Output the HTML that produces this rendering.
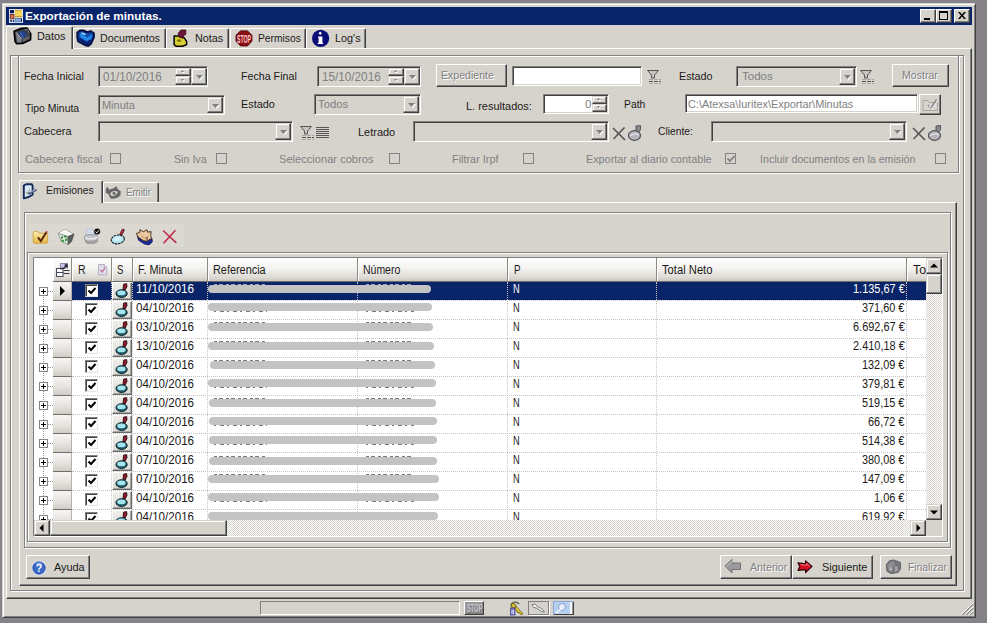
<!DOCTYPE html><html lang="es"><head><meta charset="utf-8"><title>Exportación de minutas.</title><style>
html,body{margin:0;padding:0}
body{width:987px;height:623px;overflow:hidden;background:#858387;position:relative;font-family:"Liberation Sans",sans-serif;font-size:11.5px;color:#1c1a18;}
.a{position:absolute;box-sizing:border-box}
.t{position:absolute;white-space:nowrap;line-height:13px;height:13px;transform-origin:0 0}
.g{color:#808080}
.e{color:#808080;text-shadow:1px 1px 0 #fff}
.et{position:absolute;box-sizing:border-box;border:1px solid #808080;box-shadow:inset 1px 1px 0 #fff,1px 1px 0 #fff}
.btn{position:absolute;box-sizing:border-box;background:#d6d3cd;border:1px solid;border-color:#fff #404040 #404040 #fff;box-shadow:inset -1px -1px 0 #808080}
.sb{position:absolute;box-sizing:border-box;background:#d6d3cd;border:1px solid;border-color:#d6d3cd #404040 #404040 #d6d3cd;box-shadow:inset -1px -1px 0 #808080,inset 1px 1px 0 #fff}
.sk{position:absolute;box-sizing:border-box;border:1px solid;border-color:#808080 #fff #fff #808080;box-shadow:inset 1px 1px 0 #404040,inset -1px -1px 0 #d6d3cd}
.cb{position:absolute;box-sizing:border-box;width:11px;height:11px;border:1px solid #848284;background:#d6d3cd}
.tab{position:absolute;box-sizing:border-box;border-top:1px solid #fff;border-left:1px solid #fff;border-right:1px solid #404040;box-shadow:inset -1px 0 0 #808080;border-radius:2px 2px 0 0;background:#d6d3cd}
.hd{position:absolute;box-sizing:border-box;top:0;height:24px;background:linear-gradient(#fff 0%,#f4f3f0 45%,#dddad4 85%,#c9c6bf 100%);border-right:1px solid #8c8a86;border-bottom:1px solid #6e6c68;box-shadow:inset 1px 0 0 #fff}
.rh{position:absolute;box-sizing:border-box;left:19px;width:19px;height:19px;background:linear-gradient(#f6f5f3 0%,#e4e2dd 60%,#cfccc5 100%);border-bottom:1px solid #6f6d69;border-right:1px solid #b5b2ab}
.row{position:absolute;left:0;width:892px;height:19px}
.hl{position:absolute;left:38px;width:854px;height:0;border-top:1px dotted #c4c4c4}
.vl{position:absolute;top:24px;width:0;height:238px;border-left:1px dotted #c4c4c4}
.ck{position:absolute;box-sizing:border-box;left:51px;top:2px;width:13px;height:13px;background:#fff;border:1px solid;border-color:#808080 #e8e6e0 #e8e6e0 #808080;box-shadow:inset 1px 1px 0 #404040}
.sc{position:absolute;box-sizing:border-box;left:78px;top:0;width:20px;height:18px;background:linear-gradient(#efeeeb,#dddad4);border:1px solid;border-color:#fff #6a6a6a #6a6a6a #fff;box-shadow:inset -1px -1px 0 #a8a6a0}
.pm{position:absolute;box-sizing:border-box;left:5px;top:5px;width:9px;height:9px;border:1px solid #848484;background:#fff}
.bar{position:absolute;height:8px;border-radius:4px;background:#c3c3c3}
.gt{position:absolute;white-space:nowrap;line-height:13px;height:13px;top:2px;transform-origin:0 0}
</style></head><body>
<div class="a" style="left:2px;top:3px;width:974px;height:615px;background:#d6d3cd;border:1px solid;border-color:#d6d3cd #404040 #404040 #d6d3cd;box-shadow:inset 1px 1px 0 #fff,inset -1px -1px 0 #808080"></div>
<div class="a" style="left:6px;top:7px;width:966px;height:18px;background:#0a246a"></div>
<svg class="a" style="left:9px;top:9px" width="14" height="14" viewBox="0 0 14 14"><rect x="0" y="0" width="14" height="14" fill="#dfe6f8"/><rect x="1" y="1" width="4" height="3.2" fill="#0a1c58"/><rect x="1.2" y="11" width="1.6" height="1.8" fill="#0a1c58"/><rect x="3.8" y="11" width="1.2" height="1.8" fill="#0a1c58"/><rect x="5.8" y="0.8" width="7.2" height="7.4" fill="#f2d458"/><rect x="5.8" y="0.8" width="7.2" height="1" fill="#caa040"/><rect x="5.8" y="7.2" width="7.2" height="1" fill="#b89030"/><rect x="1.3" y="5.5" width="3.6" height="4.3" fill="#d07858" stroke="#7a2c1c" stroke-width="0.9"/><rect x="6" y="9.4" width="5.2" height="3.4" fill="#8cacdc" stroke="#5070a8" stroke-width="0.8"/><rect x="12" y="9.3" width="1" height="3.6" fill="#0a1c58"/></svg>
<div class="t " style="left:25.2px;top:9px;transform:scaleX(1.0243);color:#fff;font-weight:bold;font-size:11.5px;line-height:14px;height:14px;">Exportación de minutas.</div>
<div class="btn" style="left:920px;top:9px;width:16px;height:14px;"></div>
<div class="btn" style="left:936px;top:9px;width:16px;height:14px;"></div>
<div class="btn" style="left:954px;top:9px;width:16px;height:14px;"></div>
<div class="a" style="left:924px;top:18px;width:6px;height:2px;background:#000"></div><div class="a" style="left:939px;top:11px;width:9px;height:9px;border:1px solid #000;border-top-width:2px"></div><svg class="a" style="left:958px;top:12px" width="8" height="7" viewBox="0 0 8 7"><path d="M0 0h2l2 2.5L6 0h2L5 3.5 8 7H6L4 4.5 2 7H0l3-3.5z" fill="#000"/></svg>
<div class="a" style="left:6px;top:48px;width:966px;height:551px;border:1px solid;border-color:#fff #404040 #404040 #fff;box-shadow:inset -1px -1px 0 #808080"></div>
<div class="tab" style="left:73px;top:28px;width:93px;height:20px;"></div>
<div class="t " style="left:100px;top:32px;transform:scaleX(0.9288);">Documentos</div>
<div class="tab" style="left:166px;top:28px;width:63px;height:20px;"></div>
<div class="t " style="left:195.2px;top:32px;transform:scaleX(0.9409);">Notas</div>
<div class="tab" style="left:230px;top:28px;width:76px;height:20px;"></div>
<div class="t " style="left:258px;top:32px;transform:scaleX(0.8938);">Permisos</div>
<div class="tab" style="left:306px;top:28px;width:60px;height:20px;"></div>
<div class="t " style="left:335.2px;top:32px;transform:scaleX(0.9422);">Log's</div>
<div class="tab" style="left:6px;top:26px;width:67px;height:23px;border-radius:2px 2px 0 0;"></div>
<div class="a" style="left:7px;top:48px;width:64px;height:2px;background:#d6d3cd"></div>
<div class="t " style="left:37px;top:30px;transform:scaleX(0.9476);">Datos</div>
<svg class="a" style="left:13px;top:27px" width="19" height="18" viewBox="0 0 19 18"><path d="M1.1 4.3 L8.4 1.4 L14 1.2 L17.7 6.7 L17.5 12.8 L9.6 16.4 L3.5 16.6 L2.1 14.4 Z" fill="#3c4046" stroke="#000" stroke-width="1.7" stroke-linejoin="round"/><path d="M3 6 L8.5 12.2 L8.3 15.4 L4.2 15.6 Z" fill="#7c8288"/><path d="M9.5 12 L16.5 8.5 L16.4 12 L9.6 15.2 Z" fill="#5c6066"/><path d="M5.1 5.9 L11.2 3.5 L14 9.1 L8.8 11.6 Z" fill="#24408c"/><path d="M7.5 5.5 L10.3 10.7" stroke="#5878c0" stroke-width="1"/><path d="M2.9 5.2 L8.6 11.8" fill="none" stroke="#c8ccd0" stroke-width="0.9"/><path d="M11.5 2.5 L14.5 2.5 L16.5 6.5" fill="none" stroke="#909498" stroke-width="0.9"/></svg><svg class="a" style="left:76px;top:29px" width="19" height="18" viewBox="0 0 19 18"><path d="M1.3 3.5 L4.1 1.5 L7.8 1.5 L11 3.1 L15 2.3 L17.9 4.3 L17.9 8.3 L15 14.8 L12.2 16.9 L9.8 16.5 L2.1 12.4 L1.3 8.3 Z" fill="#0e48a8" stroke="#040c40" stroke-width="1.9" stroke-linejoin="round"/><path d="M4 4.2 L11.5 8.5 L16.2 5 L15 10 L11 12 L4.5 8.5 Z" fill="#2288ec"/><path d="M5.5 4 L9.5 5.6" stroke="#b0e4ff" stroke-width="1.4"/><path d="M3.5 10.2 L11.5 15 L14.5 11" fill="none" stroke="#061a68" stroke-width="2"/></svg><svg class="a" style="left:172px;top:28px" width="17" height="20" viewBox="0 0 17 20"><path d="M2.1 8.1 L8.6 8.1 L12.2 9.8 L14.6 13.4 L14.6 16.6 L10.6 18.3 L4.1 18.3 L2.1 16.6 Z" fill="#d8d030" stroke="#000" stroke-width="1.5" stroke-linejoin="round"/><path d="M6.1 5.3 L9 2 L13.8 2 L13.8 6.5 L11.8 7.3 L11 10.2 L7.3 9.3 Z" fill="#6a1838" stroke="#3a0818" stroke-width="0.8"/><path d="M4.5 12.5 q3 -2.5 5 0 q-2 3 -5 0z" fill="#7a7410"/></svg><svg class="a" style="left:235px;top:30px" width="18" height="17" viewBox="0 0 18 17"><path d="M5.5 0.9 L12.5 0.9 L16.9 5.3 L16.9 11.2 L12.5 15.9 L5.5 15.9 L1 11.2 L1 5.3 Z" fill="#8a0c14" stroke="#5a060c" stroke-width="1"/><text x="9" y="12.6" font-family="Liberation Sans, sans-serif" font-weight="bold" font-size="11.5" fill="#ffd0d0" text-anchor="middle" textLength="13.8" lengthAdjust="spacingAndGlyphs">STOP</text></svg><svg class="a" style="left:311px;top:29px" width="19" height="19" viewBox="0 0 19 19"><circle cx="9.6" cy="9.3" r="8.6" fill="#0c0c78"/><path d="M9.2 2.6 L10.9 4.3 L9.2 6 L7.5 4.3 Z" fill="#fff"/><path d="M7.2 7.6 H11.4 V13.3 L12.4 15 H6.4 L7.6 13.3 V9 H7.2 Z" fill="#fff"/></svg>
<div class="et" style="left:10px;top:55px;width:954px;height:536px;"></div>
<div class="et" style="left:18px;top:55px;width:941px;height:118px;"></div>
<div class="t " style="left:24.2px;top:70px;transform:scaleX(0.9257);">Fecha Inicial</div>
<div class="t " style="left:241px;top:70px;transform:scaleX(0.9279);">Fecha Final</div>
<div class="t " style="left:679.3px;top:70px;transform:scaleX(0.9345);">Estado</div>
<div class="sk" style="left:98px;top:66px;width:110px;height:21px;background:#d6d3cd"></div>
<div class="t g" style="left:103.2px;top:70.6px;transform:scaleX(0.9378);font-size:12.5px;">01/10/2016</div>
<div class="sb" style="left:175px;top:68px;width:16px;height:8px;"></div>
<div class="sb" style="left:175px;top:76px;width:16px;height:9px;"></div>
<div class="sb" style="left:191px;top:68px;width:16px;height:17px;"></div>
<svg class="a" style="left:196px;top:75px" width="8" height="5"><polygon points="0,0 7,0 3.5,4" transform="translate(1,1)" fill="#fff"/><polygon points="0,0 7,0 3.5,4" fill="#808080"/></svg>
<svg class="a" style="left:181px;top:70px" width="4" height="3"><polygon points="0,2 3,2 1.5,0" transform="translate(1,1)" fill="#fff"/><polygon points="0,2 3,2 1.5,0" fill="#808080"/></svg>
<svg class="a" style="left:181px;top:79px" width="4" height="3"><polygon points="0,0 3,0 1.5,2" transform="translate(1,1)" fill="#fff"/><polygon points="0,0 3,0 1.5,2" fill="#808080"/></svg>
<div class="sk" style="left:317px;top:66px;width:104px;height:21px;background:#d6d3cd"></div>
<div class="t g" style="left:322.2px;top:70.6px;transform:scaleX(0.9378);font-size:12.5px;">15/10/2016</div>
<div class="sb" style="left:388px;top:68px;width:16px;height:8px;"></div>
<div class="sb" style="left:388px;top:76px;width:16px;height:9px;"></div>
<div class="sb" style="left:404px;top:68px;width:16px;height:17px;"></div>
<svg class="a" style="left:409px;top:75px" width="8" height="5"><polygon points="0,0 7,0 3.5,4" transform="translate(1,1)" fill="#fff"/><polygon points="0,0 7,0 3.5,4" fill="#808080"/></svg>
<svg class="a" style="left:394px;top:70px" width="4" height="3"><polygon points="0,2 3,2 1.5,0" transform="translate(1,1)" fill="#fff"/><polygon points="0,2 3,2 1.5,0" fill="#808080"/></svg>
<svg class="a" style="left:394px;top:79px" width="4" height="3"><polygon points="0,0 3,0 1.5,2" transform="translate(1,1)" fill="#fff"/><polygon points="0,0 3,0 1.5,2" fill="#808080"/></svg>
<div class="btn" style="left:436px;top:64px;width:71px;height:23px;"></div>
<div class="t e" style="left:441.4px;top:69px;transform:scaleX(0.9185);">Expediente</div>
<div class="sk" style="left:512px;top:66px;width:130px;height:20px;background:#fff"></div>
<div class="sk" style="left:736px;top:66px;width:121px;height:21px;background:#d6d3cd"></div>
<div class="sb" style="left:839px;top:68px;width:16px;height:17px;"></div>
<svg class="a" style="left:844px;top:75px" width="8" height="5"><polygon points="0,0 7,0 3.5,4" transform="translate(1,1)" fill="#fff"/><polygon points="0,0 7,0 3.5,4" fill="#808080"/></svg>
<div class="t g" style="left:742.2px;top:70px;transform:scaleX(1.0037);">Todos</div>
<div class="btn" style="left:892px;top:64px;width:57px;height:23px;"></div>
<div class="t e" style="left:901.8px;top:69px;transform:scaleX(0.9199);">Mostrar</div>
<div class="t " style="left:24.6px;top:102px;transform:scaleX(0.9078);">Tipo Minuta</div>
<div class="sk" style="left:98px;top:95px;width:127px;height:20px;background:#d6d3cd"></div>
<div class="sb" style="left:207px;top:97px;width:16px;height:16px;"></div>
<svg class="a" style="left:212px;top:104px" width="8" height="5"><polygon points="0,0 7,0 3.5,4" transform="translate(1,1)" fill="#fff"/><polygon points="0,0 7,0 3.5,4" fill="#808080"/></svg>
<div class="t g" style="left:102.2px;top:99px;transform:scaleX(0.9521);">Minuta</div>
<div class="t " style="left:241px;top:98px;transform:scaleX(0.9458);">Estado</div>
<div class="sk" style="left:314px;top:94px;width:107px;height:21px;background:#d6d3cd"></div>
<div class="sb" style="left:403px;top:96px;width:16px;height:17px;"></div>
<svg class="a" style="left:408px;top:103px" width="8" height="5"><polygon points="0,0 7,0 3.5,4" transform="translate(1,1)" fill="#fff"/><polygon points="0,0 7,0 3.5,4" fill="#808080"/></svg>
<div class="t g" style="left:318.4px;top:98px;transform:scaleX(0.9805);">Todos</div>
<div class="t " style="left:466px;top:100px;transform:scaleX(0.9541);">L. resultados:</div>
<div class="sk" style="left:543px;top:94px;width:66px;height:20px;background:#fff"></div>
<div class="t g" style="left:585px;top:98px;">0</div>
<div class="sb" style="left:592px;top:96px;width:15px;height:8px;"></div>
<div class="sb" style="left:592px;top:104px;width:15px;height:8px;"></div>
<svg class="a" style="left:597px;top:98px" width="4" height="3"><polygon points="0,2 3,2 1.5,0" transform="translate(1,1)" fill="#fff"/><polygon points="0,2 3,2 1.5,0" fill="#808080"/></svg>
<svg class="a" style="left:597px;top:106px" width="4" height="3"><polygon points="0,0 3,0 1.5,2" transform="translate(1,1)" fill="#fff"/><polygon points="0,0 3,0 1.5,2" fill="#808080"/></svg>
<div class="t " style="left:624.2px;top:98px;transform:scaleX(0.8976);">Path</div>
<div class="sk" style="left:685px;top:94px;width:233px;height:19px;background:#fff"></div>
<div class="t g" style="left:688px;top:98px;transform:scaleX(0.9472);">C:\Atexsa\Iuritex\Exportar\Minutas</div>
<div class="btn" style="left:919px;top:94px;width:22px;height:21px;"></div>
<div class="t " style="left:24.2px;top:125px;transform:scaleX(0.9539);">Cabecera</div>
<div class="sk" style="left:98px;top:121px;width:195px;height:21px;background:#d6d3cd"></div>
<div class="sb" style="left:275px;top:123px;width:16px;height:17px;"></div>
<svg class="a" style="left:280px;top:130px" width="8" height="5"><polygon points="0,0 7,0 3.5,4" transform="translate(1,1)" fill="#fff"/><polygon points="0,0 7,0 3.5,4" fill="#808080"/></svg>
<div class="t " style="left:358.3px;top:126px;transform:scaleX(0.9529);">Letrado</div>
<div class="sk" style="left:413px;top:121px;width:196px;height:21px;background:#d6d3cd"></div>
<div class="sb" style="left:591px;top:123px;width:16px;height:17px;"></div>
<svg class="a" style="left:596px;top:130px" width="8" height="5"><polygon points="0,0 7,0 3.5,4" transform="translate(1,1)" fill="#fff"/><polygon points="0,0 7,0 3.5,4" fill="#808080"/></svg>
<div class="t " style="left:658px;top:125px;transform:scaleX(0.8935);">Cliente:</div>
<div class="sk" style="left:711px;top:121px;width:196px;height:21px;background:#d6d3cd"></div>
<div class="sb" style="left:889px;top:123px;width:16px;height:17px;"></div>
<svg class="a" style="left:894px;top:130px" width="8" height="5"><polygon points="0,0 7,0 3.5,4" transform="translate(1,1)" fill="#fff"/><polygon points="0,0 7,0 3.5,4" fill="#808080"/></svg>
<svg class="a" style="left:647px;top:70px" width="15" height="15" viewBox="0 0 15 15"><path d="M0.5 0.5 H11.5 L7.5 5 V8 H4.5 V5 Z" fill="#c8c6c0" stroke="#555" stroke-width="1"/><path d="M2 9.5h4M7 9.5h4M12 9.5h2M2 13.5h4M7 13.5h4M12 13.5h2" stroke="#a8a6a0" stroke-width="1"/><path d="M2 11.5h4M7 11.5h4M12 11.5h2" stroke="#555" stroke-width="1"/></svg><svg class="a" style="left:860px;top:70px" width="15" height="15" viewBox="0 0 15 15"><path d="M0.5 0.5 H11.5 L7.5 5 V8 H4.5 V5 Z" fill="#c8c6c0" stroke="#555" stroke-width="1"/><path d="M2 9.5h4M7 9.5h4M12 9.5h2M2 13.5h4M7 13.5h4M12 13.5h2" stroke="#a8a6a0" stroke-width="1"/><path d="M2 11.5h4M7 11.5h4M12 11.5h2" stroke="#555" stroke-width="1"/></svg><svg class="a" style="left:300px;top:126px" width="15" height="15" viewBox="0 0 15 15"><path d="M0.5 0.5 H11.5 L7.5 5 V8 H4.5 V5 Z" fill="#c8c6c0" stroke="#555" stroke-width="1"/><path d="M2 9.5h4M7 9.5h4M12 9.5h2M2 13.5h4M7 13.5h4M12 13.5h2" stroke="#a8a6a0" stroke-width="1"/><path d="M2 11.5h4M7 11.5h4M12 11.5h2" stroke="#555" stroke-width="1"/></svg><svg class="a" style="left:316px;top:127px" width="13" height="11" viewBox="0 0 13 11"><path d="M0 .5h13M0 2.5h13M0 4.5h13M0 6.5h13M0 8.5h13M0 10.5h13" stroke="#555" stroke-width="1"/></svg><svg class="a" style="left:612px;top:127px" width="14" height="14" viewBox="0 0 14 14"><path d="M1 1 L13 13" stroke="#555" stroke-width="1.6"/><path d="M12.5 0.5 L1.5 12" stroke="#555" stroke-width="1.6"/></svg><svg class="a" style="left:628px;top:125px" width="14" height="17" viewBox="0 0 14 17"><path d="M8 1 L12.5 0.5 L12.5 4.5 L10.5 7.5 L8 6.5 Z" fill="#8a8a90" stroke="#555" stroke-width="1"/><ellipse cx="6.5" cy="10.5" rx="6" ry="4.8" fill="#b4b4ba" stroke="#505050" stroke-width="1.2"/><path d="M2 11 q4 -3.5 9 -1" fill="none" stroke="#e4e4e8" stroke-width="1.2"/></svg><svg class="a" style="left:912px;top:127px" width="14" height="14" viewBox="0 0 14 14"><path d="M1 1 L13 13" stroke="#555" stroke-width="1.6"/><path d="M12.5 0.5 L1.5 12" stroke="#555" stroke-width="1.6"/></svg><svg class="a" style="left:928px;top:125px" width="14" height="17" viewBox="0 0 14 17"><path d="M8 1 L12.5 0.5 L12.5 4.5 L10.5 7.5 L8 6.5 Z" fill="#8a8a90" stroke="#555" stroke-width="1"/><ellipse cx="6.5" cy="10.5" rx="6" ry="4.8" fill="#b4b4ba" stroke="#505050" stroke-width="1.2"/><path d="M2 11 q4 -3.5 9 -1" fill="none" stroke="#e4e4e8" stroke-width="1.2"/></svg><svg class="a" style="left:922px;top:97px" width="17" height="15" viewBox="0 0 17 15"><path d="M1 3.5h5l1.5 2H15.5V13.5H1z" fill="#d8d5ce" stroke="#a8a6a0"/><path d="M6 8 L9 11.5 L14.5 2.5" fill="none" stroke="#8a8a90" stroke-width="1.6"/><path d="M7 9 L10 12.5 L15.5 3.5" fill="none" stroke="#fff" stroke-width="0.8"/></svg>
<div class="t g" style="left:25px;top:153px;transform:scaleX(0.9738);">Cabecera fiscal</div>
<div class="cb" style="left:110px;top:153px;width:11px;height:11px;"></div>
<div class="t g" style="left:174.2px;top:153px;transform:scaleX(0.9287);">Sin Iva</div>
<div class="cb" style="left:216px;top:153px;width:11px;height:11px;"></div>
<div class="t g" style="left:279px;top:153px;transform:scaleX(0.966);">Seleccionar cobros</div>
<div class="cb" style="left:389px;top:153px;width:11px;height:11px;"></div>
<div class="t g" style="left:452px;top:153px;transform:scaleX(0.9445);">Filtrar Irpf</div>
<div class="cb" style="left:523px;top:153px;width:11px;height:11px;"></div>
<div class="t g" style="left:586.3px;top:153px;transform:scaleX(0.9398);">Exportar al diario contable</div>
<div class="cb" style="left:725px;top:153px;width:11px;height:11px;"></div>
<div class="t g" style="left:760px;top:153px;transform:scaleX(0.9282);">Incluir documentos en la emisión</div>
<div class="cb" style="left:935px;top:153px;width:11px;height:11px;"></div>
<svg class="a" style="left:727px;top:155px" width="8" height="8" viewBox="0 0 8 8"><path d="M0.5 3.5 L3 6 L7.5 1" fill="none" stroke="#808080" stroke-width="1.8"/></svg>
<div class="a" style="left:19px;top:202px;width:938px;height:384px;border:1px solid;border-color:#fff #404040 #404040 #fff;box-shadow:inset -1px -1px 0 #808080"></div>
<div class="tab" style="left:103px;top:182px;width:56px;height:20px;"></div>
<div class="t e" style="left:126.2px;top:186px;transform:scaleX(0.8515);">Emitir</div>
<div class="tab" style="left:19px;top:180px;width:84px;height:23px;"></div>
<div class="a" style="left:20px;top:202px;width:81px;height:2px;background:#d6d3cd"></div>
<div class="t " style="left:46.2px;top:184px;transform:scaleX(0.8999);">Emisiones</div>
<svg class="a" style="left:22px;top:183px" width="16" height="17" viewBox="0 0 16 17"><path d="M1.8 2.6 L4.2 1.2 L9.8 1.2 L10.6 3 L10.6 11.6 L6.6 14 L1.8 15.4 Z" fill="#d8e8f8" stroke="#142a58" stroke-width="1.9" stroke-linejoin="round"/><path d="M3.8 8.6 L5.8 11 L7.8 6" fill="none" stroke="#a0ac88" stroke-width="1.1"/><path d="M6.4 10.8 L14.6 6.6" stroke="#46507c" stroke-width="2"/><path d="M8.4 9.2 L13.6 6.6" stroke="#ccd4ec" stroke-width="0.8"/></svg><svg class="a" style="left:105px;top:185px" width="17" height="15" viewBox="0 0 17 15"><path d="M0.8 4 L2.5 1.5 L4 4.5 L8 3.5 L11.5 1.2 L12.5 3.8 L15.8 6.5 L15.5 10.5 L12 13 L6.5 14 L4.5 12 L3.5 9 L0.8 8 Z" fill="#686868"/><path d="M5 8.5 q3.5 -4 8 -1.5 q-2.5 4.5 -6.5 4 z" fill="#d8d6d2"/><circle cx="9" cy="8.3" r="1.5" fill="#686868"/></svg>
<div class="et" style="left:24px;top:212px;width:927px;height:336px;"></div>
<div class="a" style="left:29px;top:224px;width:155px;height:23px;background:#dbd8d1"></div>
<svg class="a" style="left:32px;top:229px" width="17" height="16" viewBox="0 0 17 16"><linearGradient id="fg" x1="0" y1="0" x2="0" y2="1"><stop offset="0" stop-color="#fbeeb0"/><stop offset="1" stop-color="#e6b648"/></linearGradient><path d="M1.2 3.6 Q1.2 2.4 2.4 2.4 H5.8 L7.2 4.2 H14.6 Q15.6 4.2 15.6 5.2 V13.2 Q15.6 14.2 14.6 14.2 H2.2 Q1.2 14.2 1.2 13.2 Z" fill="url(#fg)" stroke="#d0a040" stroke-width="0.9"/><path d="M6 8.4 L8.8 12 L14.4 3.2" fill="none" stroke="#52200c" stroke-width="1.9"/><circle cx="14.6" cy="3" r="0.9" fill="#b83820"/></svg><svg class="a" style="left:57px;top:228px" width="18" height="18" viewBox="0 0 18 18"><path d="M1.2 5.4 L8 1.4 L17 6 L11 8.6 Z" fill="#f4f6f4" stroke="#9aa09a" stroke-width="0.8"/><path d="M1.2 5.4 L11 8.6 L11.2 16.6 L4 13.2 Z" fill="#dce6dc" stroke="#8a908a" stroke-width="0.8"/><path d="M11 8.6 L17 6 L14.4 13.8 L11.2 16.6 Z" fill="#5c605c" stroke="#3c403c" stroke-width="0.6"/><path d="M3.4 4.8 L8 2.6 L13.6 5.6" fill="none" stroke="#fff" stroke-width="1"/><circle cx="7" cy="10.6" r="2.5" fill="none" stroke="#2c8c34" stroke-width="1.7" stroke-dasharray="2.6 1.2"/></svg><svg class="a" style="left:84px;top:228px" width="18" height="17" viewBox="0 0 18 17"><path d="M3 0.8 L8.4 0.8 L10.6 6.4 L9.6 8.6 L2.6 8.6 L1.8 6 Z" fill="#dfe8f4" stroke="#aab4c4" stroke-width="0.7"/><path d="M3.6 2.6 L8 2.6 M3.2 4.4 L8.8 4.4" stroke="#b8c8e0" stroke-width="0.8"/><path d="M0.6 8.4 L3.2 6.6 L11.2 6.6 L13.8 8.6 L13.8 11 L10.8 13 L3.4 13.4 L0.6 11.4 Z" fill="#c4c4c8" stroke="#86868c" stroke-width="0.8"/><path d="M1 9.4 L3.8 11 L10.8 10.6 L13.6 9" fill="none" stroke="#f4f4f8" stroke-width="1.1"/><path d="M1.2 12.6 L3.6 14.4 L10.8 14 L13.4 12.2 L13.6 13.4 L10.8 15.4 L3.6 15.8 L1.2 13.8 Z" fill="#a4a4aa" stroke="#7c7c82" stroke-width="0.5"/><circle cx="13.2" cy="3.6" r="3" fill="#0c0c0c"/><path d="M11.6 3.6 L12.8 4.9 L14.9 2.3" fill="none" stroke="#fff" stroke-width="1"/></svg><svg class="a" style="left:110px;top:228px" width="16" height="17" viewBox="0 0 16 17"><path d="M9.4 7.4 L12 1.6 L13.6 1 L14.2 2.4 L11.2 8.2 Z" fill="#c42c40" stroke="#3c0c14" stroke-width="0.8"/><ellipse cx="7.8" cy="11.4" rx="6.6" ry="4.4" transform="rotate(-8 7.8 11.4)" fill="#b4e2ee" stroke="#0c1418" stroke-width="1.1" stroke-dasharray="2.4 0.8"/><ellipse cx="7.4" cy="10.8" rx="4.2" ry="2" transform="rotate(-8 7.4 10.8)" fill="#d4f2f8"/></svg><svg class="a" style="left:135px;top:228px" width="19" height="18" viewBox="0 0 19 18"><path d="M2.4 8.4 L9 13 L17 10.6 L17.2 14 L14 16.8 L9.6 16 L3.6 12.2 Z" fill="#1c2c9c" stroke="#0a1260" stroke-width="0.9"/><path d="M1.4 5.4 L4.6 4.6 L5 1.6 L8.2 3.8 L12 1.8 L12.6 4.2 L16.2 3.6 L15.6 7.4 L16.6 10.4 L12 13.2 L8.6 12.8 L3 9 Z" fill="#ecc8a0" stroke="#3c2410" stroke-width="0.9" stroke-linejoin="round"/><path d="M5.6 7 L9.6 10.4 L13.6 8.2" fill="none" stroke="#b88858" stroke-width="0.9"/><path d="M12 9 v3.6" stroke="#3c2410" stroke-width="0.9"/></svg><svg class="a" style="left:162px;top:230px" width="15" height="14" viewBox="0 0 15 14"><path d="M1.6 1 L13.8 12.4 M13 0.8 L2 12.8" stroke="#c03050" stroke-width="1.7" stroke-linecap="round"/></svg>
<div class="et" style="left:27px;top:252px;width:921px;height:290px;"></div>
<div class="a" style="left:33px;top:257px;width:910px;height:280px;border:1px solid;border-color:#808080 #fff #fff #808080;background:#fff;overflow:hidden">
<div class="a" style="left:0;top:0;width:892px;height:262px;overflow:hidden">
<div class="hd" style="left:19px;width:19px"></div>
<div class="hd" style="left:38px;width:40px"></div>
<div class="hd" style="left:78px;width:21px"></div>
<div class="hd" style="left:99px;width:75px"></div>
<div class="hd" style="left:174px;width:150px"></div>
<div class="hd" style="left:324px;width:150px"></div>
<div class="hd" style="left:474px;width:149px"></div>
<div class="hd" style="left:623px;width:250px"></div>
<div class="hd" style="left:873px;width:30px"></div>
<div class="gt" style="top:5.5px;left:43.5px;transform:scaleX(0.8811);font-size:12px;">R</div>
<div class="gt" style="top:5.5px;left:82.7px;transform:scaleX(0.7983);font-size:12px;">S</div>
<div class="gt" style="top:5.5px;left:104.2px;transform:scaleX(0.9089);font-size:12px;">F. Minuta</div>
<div class="gt" style="top:5.5px;left:178.8px;transform:scaleX(0.9073);font-size:12px;">Referencia</div>
<div class="gt" style="top:5.5px;left:329.2px;transform:scaleX(0.8723);font-size:12px;">Número</div>
<div class="gt" style="top:5.5px;left:479.5px;transform:scaleX(0.8116);font-size:12px;">P</div>
<div class="gt" style="top:5.5px;left:628.3px;transform:scaleX(0.934);font-size:12px;">Total Neto</div>
<div class="gt" style="top:5.5px;left:878.5px;transform:scaleX(1.0256);font-size:12px;">To</div>
<svg class="a" style="left:21px;top:4px" width="16" height="17" viewBox="0 0 16 17"><rect x="5.5" y="1.5" width="7" height="4.5" fill="#c8c6ec" stroke="#8886a8"/><rect x="1.5" y="6.5" width="6.5" height="4" fill="#fff" stroke="#484860"/><rect x="1.5" y="10.5" width="6.5" height="4" fill="#fff" stroke="#484860"/><path d="M8.5 8.5 H14.5 M8.5 11.5 H14.5" stroke="#383848" stroke-width="1.1"/><path d="M5.5 7 L9 6.2 L11.5 3.2 M9.6 2.8 h2.4 v2.4" stroke="#20202c" stroke-width="1.2" fill="none"/></svg><svg class="a" style="left:64px;top:6px" width="10" height="12" viewBox="0 0 10 12"><path d="M0.5 0.5 H6 L8.8 3.2 V10.8 H0.5 Z" fill="#e2deea" stroke="#b4b0c0"/><path d="M6 0.5 V3.2 H8.8" fill="none" stroke="#b4b0c0" stroke-width="0.8"/><path d="M2.4 5.8 L4.2 8 L7 3.8" fill="none" stroke="#c068a0" stroke-width="1.2"/></svg>
<div class="a" style="left:9px;top:34px;width:0;height:228px;border-left:1px dotted #909090"></div>
<div class="row" style="top:24px">
<div class="a" style="left:38px;top:0;width:854px;height:18px;background:#0a246a"></div>
<div class="a" style="left:14px;top:9px;width:5px;height:0;border-top:1px dotted #909090"></div>
<div class="pm"><div class="a" style="left:1px;top:3px;width:5px;height:1px;background:#000"></div><div class="a" style="left:3px;top:1px;width:1px;height:5px;background:#000"></div></div>
<div class="rh"></div>
<div class="a" style="left:26px;top:4px;width:0;height:0;border-left:5px solid #000;border-top:5px solid transparent;border-bottom:5px solid transparent"></div>
<div class="ck"><svg class="a" style="left:1px;top:1px" width="10" height="10" viewBox="0 0 10 10"><path d="M1.5 4.5 L4 7 L8.5 2" fill="none" stroke="#000" stroke-width="2"/></svg></div>
<div class="sc"><svg class="a" style="left:2px;top:0" width="14" height="16" viewBox="0 0 14 16"><path d="M8.6 1.2 L11.6 0.6 L12 3.4 L10 7.2 L8 6.4 Z" fill="#8c1c2c" stroke="#2c0810" stroke-width="0.9"/><ellipse cx="6.6" cy="10.6" rx="5.6" ry="3.9" fill="#1c5866" stroke="#0c242c" stroke-width="1"/><ellipse cx="6.4" cy="9.9" rx="4.2" ry="2.3" fill="#a4e4ee"/></svg></div>
</div>
<div class="gt" style="top:24.5px;left:101.6px;transform:scaleX(0.9421);color:#fff;font-size:12.5px;">11/10/2016</div>
<div class="gt" style="top:24.5px;left:478.7px;transform:scaleX(0.7385);color:#fff;font-size:12.5px;">N</div>
<div class="gt" style="top:24.5px;left:818.6px;transform:scaleX(0.8755);color:#fff;font-size:12.5px;">1.135,67 €</div>
<div class="row" style="top:43px">
<div class="a" style="left:14px;top:9px;width:5px;height:0;border-top:1px dotted #909090"></div>
<div class="pm"><div class="a" style="left:1px;top:3px;width:5px;height:1px;background:#000"></div><div class="a" style="left:3px;top:1px;width:1px;height:5px;background:#000"></div></div>
<div class="rh"></div>
<div class="ck"><svg class="a" style="left:1px;top:1px" width="10" height="10" viewBox="0 0 10 10"><path d="M1.5 4.5 L4 7 L8.5 2" fill="none" stroke="#000" stroke-width="2"/></svg></div>
<div class="sc"><svg class="a" style="left:2px;top:0" width="14" height="16" viewBox="0 0 14 16"><path d="M8.6 1.2 L11.6 0.6 L12 3.4 L10 7.2 L8 6.4 Z" fill="#8c1c2c" stroke="#2c0810" stroke-width="0.9"/><ellipse cx="6.6" cy="10.6" rx="5.6" ry="3.9" fill="#1c5866" stroke="#0c242c" stroke-width="1"/><ellipse cx="6.4" cy="9.9" rx="4.2" ry="2.3" fill="#a4e4ee"/></svg></div>
</div>
<div class="gt" style="top:43.5px;left:101.6px;transform:scaleX(0.9281);font-size:12.5px;">04/10/2016</div>
<div class="gt" style="top:43.5px;left:478.7px;transform:scaleX(0.7385);font-size:12.5px;">N</div>
<div class="gt" style="top:43.5px;left:827.9px;transform:scaleX(0.8719);font-size:12.5px;">371,60 €</div>
<div class="row" style="top:62px">
<div class="a" style="left:14px;top:9px;width:5px;height:0;border-top:1px dotted #909090"></div>
<div class="pm"><div class="a" style="left:1px;top:3px;width:5px;height:1px;background:#000"></div><div class="a" style="left:3px;top:1px;width:1px;height:5px;background:#000"></div></div>
<div class="rh"></div>
<div class="ck"><svg class="a" style="left:1px;top:1px" width="10" height="10" viewBox="0 0 10 10"><path d="M1.5 4.5 L4 7 L8.5 2" fill="none" stroke="#000" stroke-width="2"/></svg></div>
<div class="sc"><svg class="a" style="left:2px;top:0" width="14" height="16" viewBox="0 0 14 16"><path d="M8.6 1.2 L11.6 0.6 L12 3.4 L10 7.2 L8 6.4 Z" fill="#8c1c2c" stroke="#2c0810" stroke-width="0.9"/><ellipse cx="6.6" cy="10.6" rx="5.6" ry="3.9" fill="#1c5866" stroke="#0c242c" stroke-width="1"/><ellipse cx="6.4" cy="9.9" rx="4.2" ry="2.3" fill="#a4e4ee"/></svg></div>
</div>
<div class="gt" style="top:62.5px;left:101.6px;transform:scaleX(0.9281);font-size:12.5px;">03/10/2016</div>
<div class="gt" style="top:62.5px;left:478.7px;transform:scaleX(0.7385);font-size:12.5px;">N</div>
<div class="gt" style="top:62.5px;left:818.6px;transform:scaleX(0.8755);font-size:12.5px;">6.692,67 €</div>
<div class="row" style="top:81px">
<div class="a" style="left:14px;top:9px;width:5px;height:0;border-top:1px dotted #909090"></div>
<div class="pm"><div class="a" style="left:1px;top:3px;width:5px;height:1px;background:#000"></div><div class="a" style="left:3px;top:1px;width:1px;height:5px;background:#000"></div></div>
<div class="rh"></div>
<div class="ck"><svg class="a" style="left:1px;top:1px" width="10" height="10" viewBox="0 0 10 10"><path d="M1.5 4.5 L4 7 L8.5 2" fill="none" stroke="#000" stroke-width="2"/></svg></div>
<div class="sc"><svg class="a" style="left:2px;top:0" width="14" height="16" viewBox="0 0 14 16"><path d="M8.6 1.2 L11.6 0.6 L12 3.4 L10 7.2 L8 6.4 Z" fill="#8c1c2c" stroke="#2c0810" stroke-width="0.9"/><ellipse cx="6.6" cy="10.6" rx="5.6" ry="3.9" fill="#1c5866" stroke="#0c242c" stroke-width="1"/><ellipse cx="6.4" cy="9.9" rx="4.2" ry="2.3" fill="#a4e4ee"/></svg></div>
</div>
<div class="gt" style="top:81.5px;left:101.6px;transform:scaleX(0.9281);font-size:12.5px;">13/10/2016</div>
<div class="gt" style="top:81.5px;left:478.7px;transform:scaleX(0.7385);font-size:12.5px;">N</div>
<div class="gt" style="top:81.5px;left:818.6px;transform:scaleX(0.8755);font-size:12.5px;">2.410,18 €</div>
<div class="row" style="top:100px">
<div class="a" style="left:14px;top:9px;width:5px;height:0;border-top:1px dotted #909090"></div>
<div class="pm"><div class="a" style="left:1px;top:3px;width:5px;height:1px;background:#000"></div><div class="a" style="left:3px;top:1px;width:1px;height:5px;background:#000"></div></div>
<div class="rh"></div>
<div class="ck"><svg class="a" style="left:1px;top:1px" width="10" height="10" viewBox="0 0 10 10"><path d="M1.5 4.5 L4 7 L8.5 2" fill="none" stroke="#000" stroke-width="2"/></svg></div>
<div class="sc"><svg class="a" style="left:2px;top:0" width="14" height="16" viewBox="0 0 14 16"><path d="M8.6 1.2 L11.6 0.6 L12 3.4 L10 7.2 L8 6.4 Z" fill="#8c1c2c" stroke="#2c0810" stroke-width="0.9"/><ellipse cx="6.6" cy="10.6" rx="5.6" ry="3.9" fill="#1c5866" stroke="#0c242c" stroke-width="1"/><ellipse cx="6.4" cy="9.9" rx="4.2" ry="2.3" fill="#a4e4ee"/></svg></div>
</div>
<div class="gt" style="top:100.5px;left:101.6px;transform:scaleX(0.9281);font-size:12.5px;">04/10/2016</div>
<div class="gt" style="top:100.5px;left:478.7px;transform:scaleX(0.7385);font-size:12.5px;">N</div>
<div class="gt" style="top:100.5px;left:827.9px;transform:scaleX(0.8719);font-size:12.5px;">132,09 €</div>
<div class="row" style="top:119px">
<div class="a" style="left:14px;top:9px;width:5px;height:0;border-top:1px dotted #909090"></div>
<div class="pm"><div class="a" style="left:1px;top:3px;width:5px;height:1px;background:#000"></div><div class="a" style="left:3px;top:1px;width:1px;height:5px;background:#000"></div></div>
<div class="rh"></div>
<div class="ck"><svg class="a" style="left:1px;top:1px" width="10" height="10" viewBox="0 0 10 10"><path d="M1.5 4.5 L4 7 L8.5 2" fill="none" stroke="#000" stroke-width="2"/></svg></div>
<div class="sc"><svg class="a" style="left:2px;top:0" width="14" height="16" viewBox="0 0 14 16"><path d="M8.6 1.2 L11.6 0.6 L12 3.4 L10 7.2 L8 6.4 Z" fill="#8c1c2c" stroke="#2c0810" stroke-width="0.9"/><ellipse cx="6.6" cy="10.6" rx="5.6" ry="3.9" fill="#1c5866" stroke="#0c242c" stroke-width="1"/><ellipse cx="6.4" cy="9.9" rx="4.2" ry="2.3" fill="#a4e4ee"/></svg></div>
</div>
<div class="gt" style="top:119.5px;left:101.6px;transform:scaleX(0.9281);font-size:12.5px;">04/10/2016</div>
<div class="gt" style="top:119.5px;left:478.7px;transform:scaleX(0.7385);font-size:12.5px;">N</div>
<div class="gt" style="top:119.5px;left:827.9px;transform:scaleX(0.8719);font-size:12.5px;">379,81 €</div>
<div class="row" style="top:138px">
<div class="a" style="left:14px;top:9px;width:5px;height:0;border-top:1px dotted #909090"></div>
<div class="pm"><div class="a" style="left:1px;top:3px;width:5px;height:1px;background:#000"></div><div class="a" style="left:3px;top:1px;width:1px;height:5px;background:#000"></div></div>
<div class="rh"></div>
<div class="ck"><svg class="a" style="left:1px;top:1px" width="10" height="10" viewBox="0 0 10 10"><path d="M1.5 4.5 L4 7 L8.5 2" fill="none" stroke="#000" stroke-width="2"/></svg></div>
<div class="sc"><svg class="a" style="left:2px;top:0" width="14" height="16" viewBox="0 0 14 16"><path d="M8.6 1.2 L11.6 0.6 L12 3.4 L10 7.2 L8 6.4 Z" fill="#8c1c2c" stroke="#2c0810" stroke-width="0.9"/><ellipse cx="6.6" cy="10.6" rx="5.6" ry="3.9" fill="#1c5866" stroke="#0c242c" stroke-width="1"/><ellipse cx="6.4" cy="9.9" rx="4.2" ry="2.3" fill="#a4e4ee"/></svg></div>
</div>
<div class="gt" style="top:138.5px;left:101.6px;transform:scaleX(0.9281);font-size:12.5px;">04/10/2016</div>
<div class="gt" style="top:138.5px;left:478.7px;transform:scaleX(0.7385);font-size:12.5px;">N</div>
<div class="gt" style="top:138.5px;left:827.9px;transform:scaleX(0.8719);font-size:12.5px;">519,15 €</div>
<div class="row" style="top:157px">
<div class="a" style="left:14px;top:9px;width:5px;height:0;border-top:1px dotted #909090"></div>
<div class="pm"><div class="a" style="left:1px;top:3px;width:5px;height:1px;background:#000"></div><div class="a" style="left:3px;top:1px;width:1px;height:5px;background:#000"></div></div>
<div class="rh"></div>
<div class="ck"><svg class="a" style="left:1px;top:1px" width="10" height="10" viewBox="0 0 10 10"><path d="M1.5 4.5 L4 7 L8.5 2" fill="none" stroke="#000" stroke-width="2"/></svg></div>
<div class="sc"><svg class="a" style="left:2px;top:0" width="14" height="16" viewBox="0 0 14 16"><path d="M8.6 1.2 L11.6 0.6 L12 3.4 L10 7.2 L8 6.4 Z" fill="#8c1c2c" stroke="#2c0810" stroke-width="0.9"/><ellipse cx="6.6" cy="10.6" rx="5.6" ry="3.9" fill="#1c5866" stroke="#0c242c" stroke-width="1"/><ellipse cx="6.4" cy="9.9" rx="4.2" ry="2.3" fill="#a4e4ee"/></svg></div>
</div>
<div class="gt" style="top:157.5px;left:101.6px;transform:scaleX(0.9281);font-size:12.5px;">04/10/2016</div>
<div class="gt" style="top:157.5px;left:478.7px;transform:scaleX(0.7385);font-size:12.5px;">N</div>
<div class="gt" style="top:157.5px;left:833.9px;transform:scaleX(0.8734);font-size:12.5px;">66,72 €</div>
<div class="row" style="top:176px">
<div class="a" style="left:14px;top:9px;width:5px;height:0;border-top:1px dotted #909090"></div>
<div class="pm"><div class="a" style="left:1px;top:3px;width:5px;height:1px;background:#000"></div><div class="a" style="left:3px;top:1px;width:1px;height:5px;background:#000"></div></div>
<div class="rh"></div>
<div class="ck"><svg class="a" style="left:1px;top:1px" width="10" height="10" viewBox="0 0 10 10"><path d="M1.5 4.5 L4 7 L8.5 2" fill="none" stroke="#000" stroke-width="2"/></svg></div>
<div class="sc"><svg class="a" style="left:2px;top:0" width="14" height="16" viewBox="0 0 14 16"><path d="M8.6 1.2 L11.6 0.6 L12 3.4 L10 7.2 L8 6.4 Z" fill="#8c1c2c" stroke="#2c0810" stroke-width="0.9"/><ellipse cx="6.6" cy="10.6" rx="5.6" ry="3.9" fill="#1c5866" stroke="#0c242c" stroke-width="1"/><ellipse cx="6.4" cy="9.9" rx="4.2" ry="2.3" fill="#a4e4ee"/></svg></div>
</div>
<div class="gt" style="top:176.5px;left:101.6px;transform:scaleX(0.9281);font-size:12.5px;">04/10/2016</div>
<div class="gt" style="top:176.5px;left:478.7px;transform:scaleX(0.7385);font-size:12.5px;">N</div>
<div class="gt" style="top:176.5px;left:827.9px;transform:scaleX(0.8719);font-size:12.5px;">514,38 €</div>
<div class="row" style="top:195px">
<div class="a" style="left:14px;top:9px;width:5px;height:0;border-top:1px dotted #909090"></div>
<div class="pm"><div class="a" style="left:1px;top:3px;width:5px;height:1px;background:#000"></div><div class="a" style="left:3px;top:1px;width:1px;height:5px;background:#000"></div></div>
<div class="rh"></div>
<div class="ck"><svg class="a" style="left:1px;top:1px" width="10" height="10" viewBox="0 0 10 10"><path d="M1.5 4.5 L4 7 L8.5 2" fill="none" stroke="#000" stroke-width="2"/></svg></div>
<div class="sc"><svg class="a" style="left:2px;top:0" width="14" height="16" viewBox="0 0 14 16"><path d="M8.6 1.2 L11.6 0.6 L12 3.4 L10 7.2 L8 6.4 Z" fill="#8c1c2c" stroke="#2c0810" stroke-width="0.9"/><ellipse cx="6.6" cy="10.6" rx="5.6" ry="3.9" fill="#1c5866" stroke="#0c242c" stroke-width="1"/><ellipse cx="6.4" cy="9.9" rx="4.2" ry="2.3" fill="#a4e4ee"/></svg></div>
</div>
<div class="gt" style="top:195.5px;left:101.6px;transform:scaleX(0.9281);font-size:12.5px;">07/10/2016</div>
<div class="gt" style="top:195.5px;left:478.7px;transform:scaleX(0.7385);font-size:12.5px;">N</div>
<div class="gt" style="top:195.5px;left:827.9px;transform:scaleX(0.8719);font-size:12.5px;">380,08 €</div>
<div class="row" style="top:214px">
<div class="a" style="left:14px;top:9px;width:5px;height:0;border-top:1px dotted #909090"></div>
<div class="pm"><div class="a" style="left:1px;top:3px;width:5px;height:1px;background:#000"></div><div class="a" style="left:3px;top:1px;width:1px;height:5px;background:#000"></div></div>
<div class="rh"></div>
<div class="ck"><svg class="a" style="left:1px;top:1px" width="10" height="10" viewBox="0 0 10 10"><path d="M1.5 4.5 L4 7 L8.5 2" fill="none" stroke="#000" stroke-width="2"/></svg></div>
<div class="sc"><svg class="a" style="left:2px;top:0" width="14" height="16" viewBox="0 0 14 16"><path d="M8.6 1.2 L11.6 0.6 L12 3.4 L10 7.2 L8 6.4 Z" fill="#8c1c2c" stroke="#2c0810" stroke-width="0.9"/><ellipse cx="6.6" cy="10.6" rx="5.6" ry="3.9" fill="#1c5866" stroke="#0c242c" stroke-width="1"/><ellipse cx="6.4" cy="9.9" rx="4.2" ry="2.3" fill="#a4e4ee"/></svg></div>
</div>
<div class="gt" style="top:214.5px;left:101.6px;transform:scaleX(0.9281);font-size:12.5px;">07/10/2016</div>
<div class="gt" style="top:214.5px;left:478.7px;transform:scaleX(0.7385);font-size:12.5px;">N</div>
<div class="gt" style="top:214.5px;left:827.9px;transform:scaleX(0.8719);font-size:12.5px;">147,09 €</div>
<div class="row" style="top:233px">
<div class="a" style="left:14px;top:9px;width:5px;height:0;border-top:1px dotted #909090"></div>
<div class="pm"><div class="a" style="left:1px;top:3px;width:5px;height:1px;background:#000"></div><div class="a" style="left:3px;top:1px;width:1px;height:5px;background:#000"></div></div>
<div class="rh"></div>
<div class="ck"><svg class="a" style="left:1px;top:1px" width="10" height="10" viewBox="0 0 10 10"><path d="M1.5 4.5 L4 7 L8.5 2" fill="none" stroke="#000" stroke-width="2"/></svg></div>
<div class="sc"><svg class="a" style="left:2px;top:0" width="14" height="16" viewBox="0 0 14 16"><path d="M8.6 1.2 L11.6 0.6 L12 3.4 L10 7.2 L8 6.4 Z" fill="#8c1c2c" stroke="#2c0810" stroke-width="0.9"/><ellipse cx="6.6" cy="10.6" rx="5.6" ry="3.9" fill="#1c5866" stroke="#0c242c" stroke-width="1"/><ellipse cx="6.4" cy="9.9" rx="4.2" ry="2.3" fill="#a4e4ee"/></svg></div>
</div>
<div class="gt" style="top:233.5px;left:101.6px;transform:scaleX(0.9281);font-size:12.5px;">04/10/2016</div>
<div class="gt" style="top:233.5px;left:478.7px;transform:scaleX(0.7385);font-size:12.5px;">N</div>
<div class="gt" style="top:233.5px;left:839.9px;transform:scaleX(0.8755);font-size:12.5px;">1,06 €</div>
<div class="row" style="top:252px">
<div class="a" style="left:14px;top:9px;width:5px;height:0;border-top:1px dotted #909090"></div>
<div class="pm"><div class="a" style="left:1px;top:3px;width:5px;height:1px;background:#000"></div><div class="a" style="left:3px;top:1px;width:1px;height:5px;background:#000"></div></div>
<div class="rh"></div>
<div class="ck"><svg class="a" style="left:1px;top:1px" width="10" height="10" viewBox="0 0 10 10"><path d="M1.5 4.5 L4 7 L8.5 2" fill="none" stroke="#000" stroke-width="2"/></svg></div>
<div class="sc"><svg class="a" style="left:2px;top:0" width="14" height="16" viewBox="0 0 14 16"><path d="M8.6 1.2 L11.6 0.6 L12 3.4 L10 7.2 L8 6.4 Z" fill="#8c1c2c" stroke="#2c0810" stroke-width="0.9"/><ellipse cx="6.6" cy="10.6" rx="5.6" ry="3.9" fill="#1c5866" stroke="#0c242c" stroke-width="1"/><ellipse cx="6.4" cy="9.9" rx="4.2" ry="2.3" fill="#a4e4ee"/></svg></div>
</div>
<div class="gt" style="top:252.5px;left:101.6px;transform:scaleX(0.9281);font-size:12.5px;">04/10/2016</div>
<div class="gt" style="top:252.5px;left:478.7px;transform:scaleX(0.7385);font-size:12.5px;">N</div>
<div class="gt" style="top:252.5px;left:827.9px;transform:scaleX(0.8719);font-size:12.5px;">619,92 €</div>
<div class="hl" style="top:42px"></div>
<div class="hl" style="top:61px"></div>
<div class="hl" style="top:80px"></div>
<div class="hl" style="top:99px"></div>
<div class="hl" style="top:118px"></div>
<div class="hl" style="top:137px"></div>
<div class="hl" style="top:156px"></div>
<div class="hl" style="top:175px"></div>
<div class="hl" style="top:194px"></div>
<div class="hl" style="top:213px"></div>
<div class="hl" style="top:232px"></div>
<div class="hl" style="top:251px"></div>
<div class="hl" style="top:270px"></div>
<div class="vl" style="left:77px"></div>
<div class="vl" style="left:98px"></div>
<div class="vl" style="left:173px"></div>
<div class="vl" style="left:323px"></div>
<div class="vl" style="left:473px"></div>
<div class="vl" style="left:622px"></div>
<div class="vl" style="left:872px"></div>
<div class="a" style="left:180px;top:26.4px;width:53px;height:1.3px;background:repeating-linear-gradient(90deg,#fff 0,#fff 3px,transparent 3px,transparent 5px,#fff 5px,#fff 9px,transparent 9px,transparent 12px);opacity:.6"></div>
<div class="a" style="left:332px;top:26.4px;width:48px;height:1.3px;background:repeating-linear-gradient(90deg,#fff 0,#fff 3px,transparent 3px,transparent 5px,#fff 5px,#fff 9px,transparent 9px,transparent 12px);opacity:.6"></div>
<div class="bar" style="left:174px;top:27.4px;width:223px"></div>
<div class="a" style="left:180px;top:52.8px;width:53px;height:1.3px;background:repeating-linear-gradient(90deg,#222 0,#222 2px,transparent 2px,transparent 6px,#222 6px,#222 10px,transparent 10px,transparent 13px);opacity:.6"></div>
<div class="a" style="left:332px;top:52.8px;width:48px;height:1.3px;background:repeating-linear-gradient(90deg,#222 0,#222 2px,transparent 2px,transparent 6px,#222 6px,#222 10px,transparent 10px,transparent 13px);opacity:.6"></div>
<div class="bar" style="left:174px;top:44.8px;width:224px"></div>
<div class="a" style="left:180px;top:64.4px;width:53px;height:1.3px;background:repeating-linear-gradient(90deg,#222 0,#222 3px,transparent 3px,transparent 5px,#222 5px,#222 9px,transparent 9px,transparent 12px);opacity:.6"></div>
<div class="a" style="left:332px;top:64.4px;width:48px;height:1.3px;background:repeating-linear-gradient(90deg,#222 0,#222 3px,transparent 3px,transparent 5px,#222 5px,#222 9px,transparent 9px,transparent 12px);opacity:.6"></div>
<div class="bar" style="left:174px;top:65.3px;width:225px"></div>
<div class="a" style="left:180px;top:82.8px;width:53px;height:1.3px;background:repeating-linear-gradient(90deg,#222 0,#222 3px,transparent 3px,transparent 5px,#222 5px,#222 9px,transparent 9px,transparent 12px);opacity:.6"></div>
<div class="a" style="left:332px;top:82.8px;width:48px;height:1.3px;background:repeating-linear-gradient(90deg,#222 0,#222 3px,transparent 3px,transparent 5px,#222 5px,#222 9px,transparent 9px,transparent 12px);opacity:.6"></div>
<div class="bar" style="left:174px;top:83.7px;width:226px"></div>
<div class="a" style="left:180px;top:102px;width:53px;height:1.3px;background:repeating-linear-gradient(90deg,#222 0,#222 3px,transparent 3px,transparent 5px,#222 5px,#222 9px,transparent 9px,transparent 12px);opacity:.6"></div>
<div class="a" style="left:332px;top:102px;width:48px;height:1.3px;background:repeating-linear-gradient(90deg,#222 0,#222 3px,transparent 3px,transparent 5px,#222 5px,#222 9px,transparent 9px,transparent 12px);opacity:.6"></div>
<div class="bar" style="left:176px;top:103px;width:225px"></div>
<div class="a" style="left:180px;top:129px;width:53px;height:1.3px;background:repeating-linear-gradient(90deg,#222 0,#222 2px,transparent 2px,transparent 6px,#222 6px,#222 10px,transparent 10px,transparent 13px);opacity:.6"></div>
<div class="a" style="left:332px;top:129px;width:48px;height:1.3px;background:repeating-linear-gradient(90deg,#222 0,#222 2px,transparent 2px,transparent 6px,#222 6px,#222 10px,transparent 10px,transparent 13px);opacity:.6"></div>
<div class="bar" style="left:174px;top:121px;width:228px"></div>
<div class="a" style="left:180px;top:139.8px;width:53px;height:1.3px;background:repeating-linear-gradient(90deg,#222 0,#222 3px,transparent 3px,transparent 5px,#222 5px,#222 9px,transparent 9px,transparent 12px);opacity:.6"></div>
<div class="a" style="left:332px;top:139.8px;width:48px;height:1.3px;background:repeating-linear-gradient(90deg,#222 0,#222 3px,transparent 3px,transparent 5px,#222 5px,#222 9px,transparent 9px,transparent 12px);opacity:.6"></div>
<div class="bar" style="left:175px;top:140.7px;width:226.5px"></div>
<div class="a" style="left:180px;top:167px;width:53px;height:1.3px;background:repeating-linear-gradient(90deg,#222 0,#222 2px,transparent 2px,transparent 6px,#222 6px,#222 10px,transparent 10px,transparent 13px);opacity:.6"></div>
<div class="a" style="left:332px;top:167px;width:48px;height:1.3px;background:repeating-linear-gradient(90deg,#222 0,#222 2px,transparent 2px,transparent 6px,#222 6px,#222 10px,transparent 10px,transparent 13px);opacity:.6"></div>
<div class="bar" style="left:175px;top:159px;width:228px"></div>
<div class="a" style="left:180px;top:186px;width:53px;height:1.3px;background:repeating-linear-gradient(90deg,#222 0,#222 2px,transparent 2px,transparent 6px,#222 6px,#222 10px,transparent 10px,transparent 13px);opacity:.6"></div>
<div class="a" style="left:332px;top:186px;width:48px;height:1.3px;background:repeating-linear-gradient(90deg,#222 0,#222 2px,transparent 2px,transparent 6px,#222 6px,#222 10px,transparent 10px,transparent 13px);opacity:.6"></div>
<div class="bar" style="left:175px;top:178px;width:228px"></div>
<div class="a" style="left:180px;top:198.2px;width:53px;height:1.3px;background:repeating-linear-gradient(90deg,#222 0,#222 3px,transparent 3px,transparent 5px,#222 5px,#222 9px,transparent 9px,transparent 12px);opacity:.6"></div>
<div class="a" style="left:332px;top:198.2px;width:48px;height:1.3px;background:repeating-linear-gradient(90deg,#222 0,#222 3px,transparent 3px,transparent 5px,#222 5px,#222 9px,transparent 9px,transparent 12px);opacity:.6"></div>
<div class="bar" style="left:175px;top:199.3px;width:228px"></div>
<div class="a" style="left:180px;top:215.8px;width:53px;height:1.3px;background:repeating-linear-gradient(90deg,#222 0,#222 3px,transparent 3px,transparent 5px,#222 5px,#222 9px,transparent 9px,transparent 12px);opacity:.6"></div>
<div class="a" style="left:332px;top:215.8px;width:48px;height:1.3px;background:repeating-linear-gradient(90deg,#222 0,#222 3px,transparent 3px,transparent 5px,#222 5px,#222 9px,transparent 9px,transparent 12px);opacity:.6"></div>
<div class="bar" style="left:173.5px;top:216.8px;width:231.5px"></div>
<div class="a" style="left:180px;top:243px;width:53px;height:1.3px;background:repeating-linear-gradient(90deg,#222 0,#222 2px,transparent 2px,transparent 6px,#222 6px,#222 10px,transparent 10px,transparent 13px);opacity:.6"></div>
<div class="a" style="left:332px;top:243px;width:48px;height:1.3px;background:repeating-linear-gradient(90deg,#222 0,#222 2px,transparent 2px,transparent 6px,#222 6px,#222 10px,transparent 10px,transparent 13px);opacity:.6"></div>
<div class="bar" style="left:173.5px;top:235px;width:231.5px"></div>
<div class="bar" style="left:173.5px;top:254px;width:230.5px"></div>
</div>
<div class="a" style="left:892px;top:0;width:16px;height:262px;background:#e9e7e3 repeating-conic-gradient(#fff 0 25%,#d6d3cd 0 50%,#fff 0 75%,#d6d3cd 0 100%) 0 0/2px 2px;"></div>
<div class="a" style="left:0;top:262px;width:892px;height:16px;background:#e9e7e3 repeating-conic-gradient(#fff 0 25%,#d6d3cd 0 50%,#fff 0 75%,#d6d3cd 0 100%) 0 0/2px 2px;"></div>
<div class="a" style="left:892px;top:262px;width:16px;height:16px;background:#d6d3cd"></div>
<div class="sb" style="left:892px;top:0;width:16px;height:16px"></div>
<div class="sb" style="left:892px;top:16px;width:16px;height:20px"></div>
<div class="sb" style="left:892px;top:246px;width:16px;height:16px"></div>
<div class="sb" style="left:0;top:262px;width:16px;height:16px"></div>
<div class="sb" style="left:16px;top:262px;width:177px;height:16px"></div>
<div class="sb" style="left:876px;top:262px;width:16px;height:16px"></div>
<svg class="a" style="left:896px;top:5px" width="8" height="5" viewBox="0 0 8 5"><path d="M0 4.5 L4 0.5 L8 4.5 Z" fill="#000"/></svg><svg class="a" style="left:896px;top:252px" width="8" height="5" viewBox="0 0 8 5"><path d="M0 0.5 L8 0.5 L4 4.5 Z" fill="#000"/></svg><svg class="a" style="left:5px;top:266px" width="5" height="8" viewBox="0 0 5 8"><path d="M4.5 0 L4.5 8 L0.5 4 Z" fill="#000"/></svg><svg class="a" style="left:882px;top:266px" width="5" height="8" viewBox="0 0 5 8"><path d="M0.5 0 L0.5 8 L4.5 4 Z" fill="#000"/></svg>
</div>
<div class="btn" style="left:26px;top:555px;width:64px;height:24px;"></div>
<div class="t " style="left:54px;top:561px;transform:scaleX(0.9465);">Ayuda</div>
<div class="btn" style="left:720px;top:555px;width:72px;height:24px;"></div>
<div class="t e" style="left:749.6px;top:561px;transform:scaleX(0.9251);">Anterior</div>
<div class="btn" style="left:792px;top:555px;width:81px;height:24px;"></div>
<div class="t " style="left:821.6px;top:561px;transform:scaleX(0.9459);">Siguiente</div>
<div class="btn" style="left:880px;top:555px;width:72px;height:24px;"></div>
<div class="t e" style="left:908.2px;top:561px;transform:scaleX(0.8937);">Finalizar</div>
<svg class="a" style="left:31px;top:560px" width="16" height="16" viewBox="0 0 16 16"><circle cx="8" cy="8" r="7.4" fill="#e8f0ff"/><circle cx="8" cy="8" r="6.2" fill="#3868c8" stroke="#1a3a98" stroke-width="0.8"/><path d="M5.2 4.6 A3.4 3.4 0 0 1 10.8 4.6" fill="none" stroke="#88a8f0" stroke-width="1.6"/><text x="8" y="12" font-family="Liberation Sans, sans-serif" font-weight="bold" font-size="10.5" fill="#fff" text-anchor="middle">?</text></svg><svg class="a" style="left:724px;top:558px" width="18" height="17" viewBox="0 0 18 17"><path d="M1 8 L8 1.5 L8 5 L16.5 5 L16.5 11.5 L8 11.5 L8 15 Z" fill="#9a9a9e" stroke="#707074" stroke-width="1"/><path d="M2 9 L9 2.5" stroke="#c8c8cc" stroke-width="1"/></svg><svg class="a" style="left:797px;top:560px" width="16" height="14" viewBox="0 0 16 14"><path d="M15 6.4 L8.6 0.9 L8.6 3.8 L1 2.9 L2.8 6.6 L1 10.4 L8.6 9.6 L8.6 12.6 Z" fill="#d41020" stroke="#2c0008" stroke-width="1.2" stroke-linejoin="round"/><path d="M3.6 4.6 L9.6 5.2 L9.6 3.4 L12.6 6.2" fill="none" stroke="#ff8088" stroke-width="0.9"/></svg><svg class="a" style="left:885px;top:559px" width="17" height="16" viewBox="0 0 17 16"><path d="M1.2 5.6 L4.4 1.8 L9 1 L15.4 3.4 L15.6 10 L13 13.6 L6 14.6 L2 12.4 Z" fill="#77777b" stroke="#606064" stroke-width="0.9" stroke-linejoin="round"/><path d="M2.6 6.4 L5 3.2 L9 2.6 L9.6 7 L7.6 8 L7.6 12.6 L3.4 11.4 Z" fill="#8d8d91"/><path d="M9.8 7.4 h3 v4.4 l-3 1z" fill="#a2a2a6"/><path d="M5 8.4 h1.6 v3 h-1.6z" fill="#c4c4c8"/></svg>
<div class="a" style="left:260px;top:601px;width:200px;height:14px;border:1px solid;border-color:#808080 #fff #fff #808080"></div>
<div class="btn" style="left:464px;top:601px;width:20px;height:14px;background:#96969a"></div><div class="t" style="left:466.5px;top:601.5px;font-size:11px;font-weight:bold;color:#c8c8cc;text-shadow:1px 1px 0 #6c6c70;transform:scaleX(.52)">STOP</div><svg class="a" style="left:508px;top:600px" width="17" height="16" viewBox="0 0 17 16"><path d="M3 6 A4.5 4.5 0 0 1 11 4" fill="none" stroke="#6a6a50" stroke-width="1.6"/><path d="M4 3 L8 5 L7 8 L3 7 Z" fill="#d8c030" stroke="#6a5a10" stroke-width="0.8"/><path d="M8 6 L15 14 L12.5 14.5 L11 12 L10 13 L7 8.5 Z" fill="#e0c838" stroke="#6a5a10" stroke-width="0.8"/><rect x="2.5" y="8" width="4.5" height="7" fill="#8080c8" stroke="#404088" stroke-width="0.8"/><path d="M4 10 v4 M5.5 10 v4" stroke="#e8e8ff" stroke-width="0.8"/></svg><div class="a" style="left:528px;top:601px;width:21px;height:14px;border:1px solid #808080;box-shadow:1px 1px 0 #fff"></div><svg class="a" style="left:531px;top:603px" width="16" height="10" viewBox="0 0 16 10"><path d="M1 1.5 L4 1 L6 3 L11 6 L13.5 9 L10.5 8.5 L5.5 5 L2.5 4.5 Z" fill="#f0f0f0" stroke="#707070" stroke-width="0.9"/></svg><svg class="a" style="left:553px;top:601px" width="21" height="14" viewBox="0 0 21 14"><rect x="0.5" y="0.5" width="20" height="13" fill="#b8d0f0" stroke="#8aa8d8"/><rect x="17" y="1" width="3" height="12" fill="#f4f6fa"/><rect x="19.5" y="1" width="1.5" height="13" fill="#404040"/><path d="M1 13.5 H21" stroke="#404040"/><circle cx="9" cy="6" r="3.5" fill="#e8f0ff" stroke="#88a0d0"/><path d="M3 12 L8 8" stroke="#fff" stroke-width="1.5"/></svg><svg class="a" style="left:961px;top:603px" width="13" height="13" viewBox="0 0 13 13"><path d="M12 1 L1 12 M12 5 L5 12 M12 9 L9 12" stroke="#808080" stroke-width="1.4"/><path d="M12 0 L0 12 M12 4 L4 12 M12 8 L8 12" stroke="#fff" stroke-width="1"/></svg>
</body></html>
